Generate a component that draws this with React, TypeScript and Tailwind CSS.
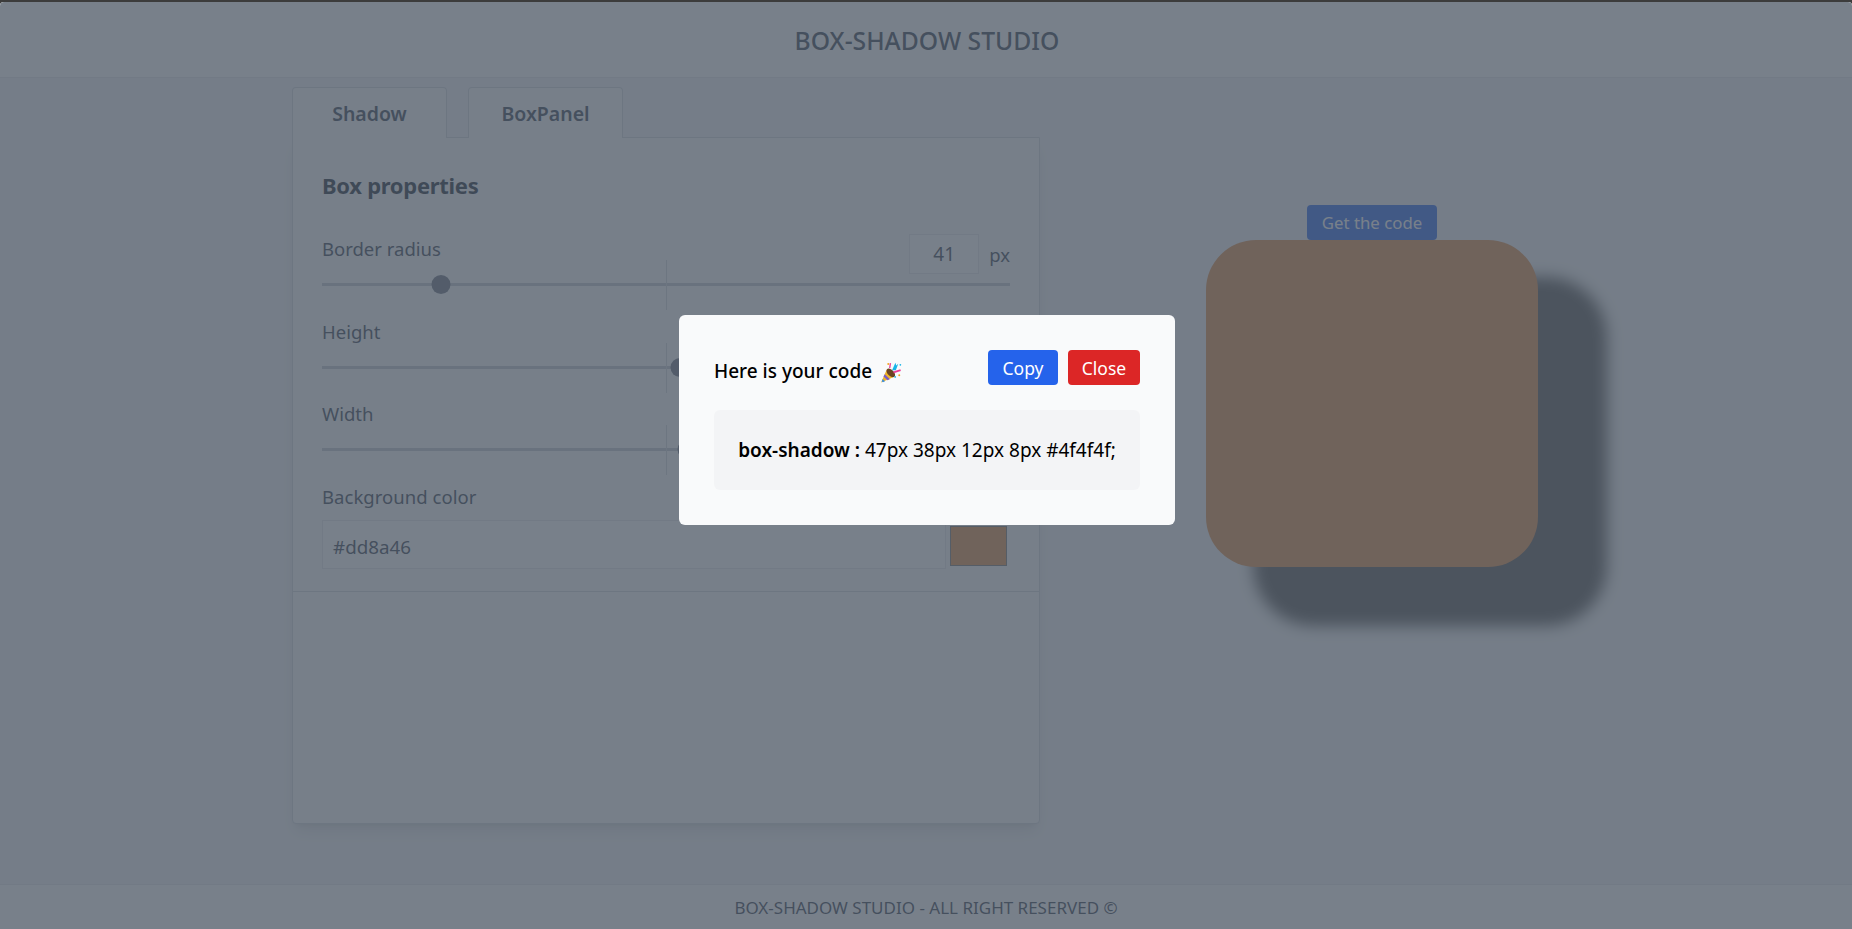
import React from "react";

const sliders = [
  { label: "Border radius", value: 41, thumb: 119 },
  { label: "Height", value: 327, thumb: 358 },
  { label: "Width", value: 332, thumb: 365 },
];

function Slider({ label, value, thumb }: { label: string; value: number; thumb: number }) {
  return (
    <div className="h-[82.6px]">
      <div className="flex h-[40px] justify-between">
        <div className="mt-[3px] text-[18.5px] leading-[26px]">{label}</div>
        <div className="mt-[2px] flex items-center">
          <div className="flex h-[40px] w-[70px] items-center justify-center border border-[#e5e7eb] bg-white pt-[1px] text-[19px]">
            {value}
          </div>
          <span className="ml-[10px] pt-[1px] text-[18.5px] leading-[26px]">px</span>
        </div>
      </div>
      <div className="relative mt-[10px] h-[3px] bg-[#c4c8d0]">
        <div className="absolute left-1/2 top-[-23px] h-[50px] w-px bg-[#d1d5db]" />
        <div
          className="absolute top-[-8px] h-[19px] w-[19px] -translate-x-1/2 rounded-full bg-[#6b7280]"
          style={{ left: thumb }}
        />
      </div>
    </div>
  );
}

function Popper() {
  return (
    <svg viewBox="0 0 20 20" className="ml-[8px] h-[22px] w-[22px]">
      <path d="M1 19.5 6.500 7l7 7z" fill="#f0b429" />
      <path d="M4.300 12 9 16.600l-2.200 1L3.200 14.200z" fill="#7a5cc4" />
      <path d="M2.400 16.300 4.600 18.500l-2 .9-1-1z" fill="#3f8fd8" />
      <ellipse cx="9.800" cy="10.800" rx="2.800" ry="4.800" transform="rotate(-45 9.800 10.800)" fill="#6b4423" />
      <path d="M11 8.500 14 1.500l.8 2.500 1.800-1.500-2.200 6z" fill="#19b5e8" />
      <path d="M12.500 11.200 19 9l-.5-1.600-6.500 2.200z" fill="#ec3d97" />
      <path d="M8.800 6.500 9.500 2" stroke="#ec3d97" strokeWidth="1.200" fill="none" />
      <circle cx="7.500" cy="2.800" r=".9" fill="#f5a623" />
      <circle cx="17.500" cy="13" r=".9" fill="#f5a623" />
      <circle cx="13.800" cy="14.500" r=".8" fill="#19b5e8" />
      <circle cx="18.500" cy="3.500" r=".8" fill="#19b5e8" />
    </svg>
  );
}

export default function App() {
  return (
    <div className="h-screen overflow-hidden bg-[#3c3c3c] pt-[2px] font-['Noto_Sans','Open_Sans',sans-serif]">
      <div className="relative flex h-full flex-col overflow-hidden rounded-t-[4px] bg-[#f3f4f6] text-[#374151]">
        {/* Header */}
        <header className="flex h-[76px] flex-none items-center justify-center border-b border-[#e5e7eb] bg-white pt-[2px]">
          <h1 className="ml-[2px] text-[24.7px] font-medium text-[#374151]">BOX-SHADOW STUDIO</h1>
        </header>

        {/* Main */}
        <main className="flex flex-1">
          <section className="ml-[292px] mt-[9px] w-[748px]">
            <div className="flex">
              <div className="relative -mb-px flex h-[51px] w-[155px] items-center justify-center rounded-t-[4px] border border-b-0 border-[#d1d5db] bg-[#f9fafb] pt-[1px] text-[19.500px] font-semibold">
                Shadow
              </div>
              <div className="relative -mb-px ml-[21px] flex h-[51px] w-[155px] items-center justify-center rounded-t-[4px] border border-b-0 border-[#d1d5db] bg-[#f9fafb] pt-[1px] text-[19.500px] font-semibold">
                BoxPanel
              </div>
            </div>
            <div className="h-[687px] rounded-b-[4px] border border-[#d1d5db] bg-[#f9fafb] px-[29px] shadow-lg">
              <h2 className="mt-[30px] text-[22px] font-bold leading-[34px] tracking-[-0.3px] text-[#1f2937]">Box properties</h2>
              <div className="mt-[31px]">
                {sliders.map((s) => (
                  <Slider key={s.label} {...s} />
                ))}
              </div>
              <div className="mt-[3.500px] text-[18.500px] leading-[26px] tracking-[0.05px]">Background color</div>
              <div className="mt-[10px] flex items-center">
                <div className="flex h-[49px] w-[624px] items-center border border-[#e5e7eb] bg-white pl-[10px] pt-[4px] text-[18.800px]">
                  #dd8a46
                </div>
                <div className="ml-[4px] mt-[2px] h-[40px] w-[57px] border border-[#767676] bg-[#dd8a46]" />
              </div>
              <div className="mx-[-29px] mt-[22px] border-t border-[#d1d5db]" />
            </div>
          </section>

          <section className="flex w-[664px] flex-col items-center pt-[127px]">
            <button className="flex h-[35px] w-[130px] items-center justify-center rounded-[4px] bg-[#2563eb] pt-[1px] text-[16.800px] text-white">
              Get the code
            </button>
            <div className="h-[327px] w-[332px] rounded-[50px] bg-[#dd8a46] shadow-[58px_48px_15px_11px_#4f4f4f]" />
          </section>
        </main>

        {/* Footer */}
        <footer className="flex h-[45px] flex-none items-center justify-center border-t border-[#e5e7eb] bg-white pt-[1px] text-[17px]">
          BOX-SHADOW STUDIO - ALL RIGHT RESERVED ©
        </footer>

        {/* Modal */}
        <div className="absolute inset-0 bg-[#4b5563]/75" />
        <div className="absolute left-[679px] top-[313px] h-[210px] w-[496px] rounded-[6px] bg-[#f9fafb] p-[35px] text-black">
          <div className="flex items-center justify-between">
            <div className="mt-[8px] flex items-center text-[19px] font-medium leading-[27px]">
              Here is your code
              <Popper />
            </div>
            <div className="flex gap-[10px]">
              <button className="h-[35px] w-[70px] rounded-[4px] bg-[#2563eb] pt-[1px] text-[17.500px] text-white">Copy</button>
              <button className="h-[35px] w-[72px] rounded-[4px] bg-[#dc2626] pt-[1px] text-[17.500px] text-white">Close</button>
            </div>
          </div>
          <div className="mt-[25px] flex h-[80px] items-center justify-center rounded-[6px] bg-[#f3f4f6] pt-[1px] text-[19px]">
            <b className="font-semibold">box-shadow :</b>&nbsp;47px 38px 12px 8px #4f4f4f;
          </div>
        </div>
      </div>
    </div>
  );
}
